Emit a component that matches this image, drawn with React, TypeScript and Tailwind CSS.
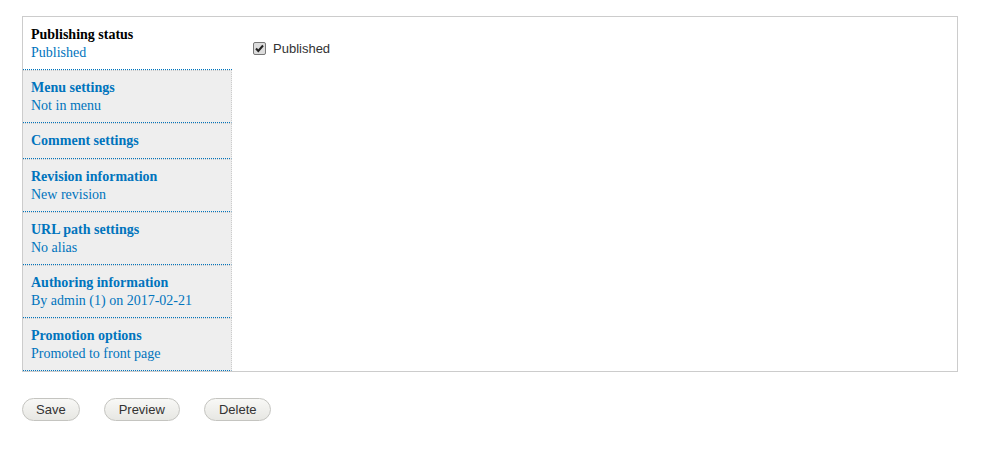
import React from 'react';

const tabs = [
    { title: "Publishing status", summary: "Published" },
    { title: "Menu settings", summary: "Not in menu" },
    { title: "Comment settings", summary: "" },
    { title: "Revision information", summary: "New revision" },
    { title: "URL path settings", summary: "No alias" },
    { title: "Authoring information", summary: "By admin (1) on 2017-02-21" },
    { title: "Promotion options", summary: "Promoted to front page" },
];

function Button({ label, className = "" }: { label: string; className?: string }) {
    return (
        <button
            className={`h-[23px] rounded-full border border-[#c4c4c0] bg-gradient-to-b from-[#f8f8f6] to-[#e7e7e3] text-[13px] leading-[21px] text-[#333] font-['Liberation_Sans',Arial,sans-serif] ${className}`}
        >
            {label}
        </button>
    );
}

export default function App() {
    return (
        <div className="min-h-screen bg-white pt-[16px] pl-[22px] font-['Liberation_Serif',serif]">
            <div className="w-[936px] h-[356px] border border-[#ccc] flex">
                <ul className="w-[209px] flex flex-col">
                    {tabs.map((tab, i) => {
                        const selected = i === 0;
                        return (
                            <li
                                key={tab.title}
                                className={`px-[8px] border-b border-dotted border-b-[#0074bd] text-[14px] leading-[18px] ${
                                    tab.summary ? "pb-[7px]" : "pb-[8px]"
                                } ${
                                    selected
                                        ? "bg-white pt-[9px]"
                                        : "bg-[#eee] pt-[8px] border-t border-t-[#ccc] border-r border-r-[#ccc]"
                                }`}
                            >
                                <div className={`font-bold ${selected ? "text-black" : "text-[#0074bd]"}`}>{tab.title}</div>
                                {tab.summary && <div className="text-[#0074bd]">{tab.summary}</div>}
                            </li>
                        );
                    })}
                    <li className="flex-1 border-r border-r-[#ccc]" />
                </ul>
                <div className="flex-1 pl-[21px] pt-[22px]">
                    <label className="flex items-center gap-[7px] text-[13px] text-[#333] font-['Liberation_Sans',Arial,sans-serif]">
                        <span className="w-[13px] h-[13px] rounded-[2px] border border-[#777] bg-[#dcdcdc] flex items-center justify-center">
                            <svg width="11" height="11" viewBox="0 0 11 11">
                                <path d="M2 5.5 L4.3 8 L9 2.5" fill="none" stroke="#222" strokeWidth="2" />
                            </svg>
                        </span>
                        Published
                    </label>
                </div>
            </div>
            <div className="flex items-start mt-[26px]">
                <Button label="Save" className="px-[13px]" />
                <Button label="Preview" className="px-[14px] ml-[24px]" />
                <Button label="Delete" className="px-[14px] ml-[24px]" />
            </div>
        </div>
    );
}
